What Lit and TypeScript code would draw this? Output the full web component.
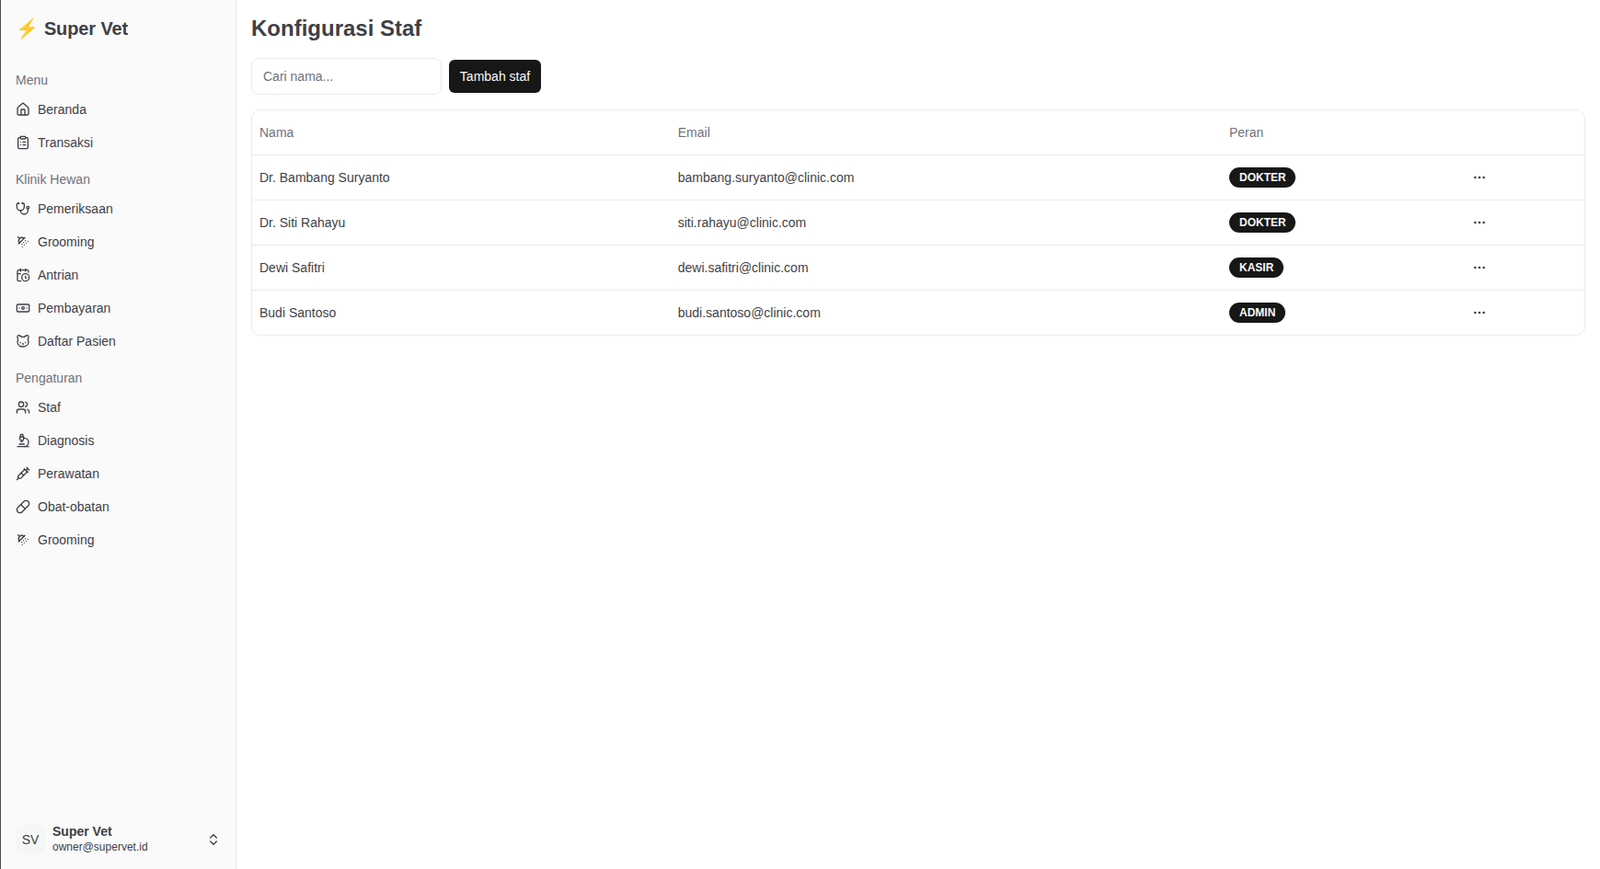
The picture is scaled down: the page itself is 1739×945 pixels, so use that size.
import { LitElement, html, css, svg } from "lit";
import { customElement } from "lit/decorators.js";

const icons: Record<string, any> = {
  house: svg`<path d="M15 21v-8a1 1 0 0 0-1-1h-4a1 1 0 0 0-1 1v8"/><path d="M3 10a2 2 0 0 1 .709-1.528l7-5.999a2 2 0 0 1 2.582 0l7 5.999A2 2 0 0 1 21 10v9a2 2 0 0 1-2 2H5a2 2 0 0 1-2-2z"/>`,
  clipboard: svg`<rect x="8" y="2" width="8" height="4" rx="1"/><path d="M16 4h2a2 2 0 0 1 2 2v14a2 2 0 0 1-2 2H6a2 2 0 0 1-2-2V6a2 2 0 0 1 2-2h2"/><path d="M12 11h4"/><path d="M12 16h4"/><path d="M8 11h.01"/><path d="M8 16h.01"/>`,
  stethoscope: svg`<path d="M11 2v2"/><path d="M5 2v2"/><path d="M5 3H4a2 2 0 0 0-2 2v4a6 6 0 0 0 12 0V5a2 2 0 0 0-2-2h-1"/><path d="M8 15a6 6 0 0 0 12 0v-3"/><circle cx="20" cy="10" r="2"/>`,
  shower: svg`<path d="m4 4 2.5 2.5"/><path d="M13.5 6.5a4.95 4.95 0 0 0-7 7"/><path d="M15 5 5 15"/><path d="M14 17v.01"/><path d="M10 16v.01"/><path d="M13 13v.01"/><path d="M16 10v.01"/><path d="M11 20v.01"/><path d="M17 14v.01"/><path d="M20 11v.01"/>`,
  calendar: svg`<path d="M21 7.5V6a2 2 0 0 0-2-2H5a2 2 0 0 0-2 2v14a2 2 0 0 0 2 2h3.5"/><path d="M16 2v4"/><path d="M8 2v4"/><path d="M3 10h5"/><path d="M17.5 17.5 16 16.3V14"/><circle cx="16" cy="16" r="6"/>`,
  banknote: svg`<rect width="20" height="12" x="2" y="6" rx="2"/><circle cx="12" cy="12" r="2"/><path d="M6 12h.01M18 12h.01"/>`,
  cat: svg`<path d="M12 5c.67 0 1.35.09 2 .26 1.78-2 5.03-2.84 6.42-2.26 1.4.58-.42 7-.42 7 .57 1.07 1 2.24 1 3.44C21 17.9 16.97 21 12 21s-9-3-9-7.56c0-1.25.5-2.4 1-3.44 0 0-1.89-6.42-.5-7 1.39-.58 4.72.23 6.5 2.23A9.04 9.04 0 0 1 12 5Z"/><path d="M8 14v.5"/><path d="M16 14v.5"/><path d="M11.25 16.25h1.5L12 17l-.75-.75Z"/>`,
  users: svg`<path d="M16 21v-2a4 4 0 0 0-4-4H6a4 4 0 0 0-4 4v2"/><circle cx="9" cy="7" r="4"/><path d="M22 21v-2a4 4 0 0 0-3-3.87"/><path d="M16 3.13a4 4 0 0 1 0 7.75"/>`,
  microscope: svg`<path d="M6 18h8"/><path d="M3 22h18"/><path d="M14 22a7 7 0 1 0 0-14h-1"/><path d="M9 14h2"/><path d="M9 12a2 2 0 0 1-2-2V6h6v4a2 2 0 0 1-2 2Z"/><path d="M12 6V3a1 1 0 0 0-1-1H9a1 1 0 0 0-1 1v3"/>`,
  syringe: svg`<path d="m18 2 4 4"/><path d="m17 7 3-3"/><path d="M19 9 8.7 19.3c-1 1-2.5 1-3.4 0l-.6-.6c-1-1-1-2.5 0-3.4L15 5"/><path d="m9 11 4 4"/><path d="m5 19-3 3"/><path d="m14 4 6 6"/>`,
  pill: svg`<path d="m10.5 20.5 10-10a4.95 4.95 0 1 0-7-7l-10 10a4.95 4.95 0 1 0 7 7Z"/><path d="m8.5 8.5 7 7"/>`,
  chevrons: svg`<path d="m7 15 5 5 5-5"/><path d="m7 9 5-5 5 5"/>`,
  ellipsis: svg`<circle cx="12" cy="12" r="1"/><circle cx="19" cy="12" r="1"/><circle cx="5" cy="12" r="1"/>`,
};

const icon = (name: string) =>
  html`<svg class="icon" viewBox="0 0 24 24" fill="none" stroke="currentColor" stroke-width="2" stroke-linecap="round" stroke-linejoin="round">${icons[name]}</svg>`;

const groups = [
  { label: "Menu", items: [["house", "Beranda"], ["clipboard", "Transaksi"]] },
  {
    label: "Klinik Hewan",
    items: [["stethoscope", "Pemeriksaan"], ["shower", "Grooming"], ["calendar", "Antrian"], ["banknote", "Pembayaran"], ["cat", "Daftar Pasien"]],
  },
  {
    label: "Pengaturan",
    items: [["users", "Staf"], ["microscope", "Diagnosis"], ["syringe", "Perawatan"], ["pill", "Obat-obatan"], ["shower", "Grooming"]],
  },
];

const staff = [
  ["Dr. Bambang Suryanto", "bambang.suryanto@clinic.com", "DOKTER"],
  ["Dr. Siti Rahayu", "siti.rahayu@clinic.com", "DOKTER"],
  ["Dewi Safitri", "dewi.safitri@clinic.com", "KASIR"],
  ["Budi Santoso", "budi.santoso@clinic.com", "ADMIN"],
];

@customElement("app-root")
export class AppRoot extends LitElement {
  static styles = css`
    :host {
      display: block;
      height: 945px;
      overflow: hidden;
      background: #4a4a55;
      padding-left: 1px;
      box-sizing: border-box;
      font-family: "Liberation Sans", Arial, sans-serif;
      font-size: 14px;
      color: #3f3f46;
    }
    * { box-sizing: border-box; }
    .shell { display: flex; height: 100%; background: #fff; }
    .sidebar {
      width: 256px;
      flex: none;
      background: #fafafa;
      border-right: 1px solid #ebebeb;
      display: flex;
      flex-direction: column;
    }
    .brand {
      display: flex;
      align-items: flex-start;
      gap: 6px;
      padding: 17px 16px 0;
      height: 65px;
      font-size: 20px;
      font-weight: 700;
      line-height: 28px;
      letter-spacing: -0.12px;
    }
    .nav { display: flex; flex-direction: column; flex: 1; }
    .group { padding: 8px 8px 0; }
    .label {
      height: 28px;
      padding: 0 8px;
      display: flex;
      align-items: center;
      font-size: 14px;
      color: #71717a;
    }
    .item {
      height: 36px;
      padding: 0 8px;
      display: flex;
      align-items: center;
      gap: 8px;
    }
    .item .icon { width: 16px; height: 16px; flex: none; }
    .user {
      display: flex;
      align-items: center;
      gap: 8px;
      padding: 16px;
    }
    .avatar {
      width: 32px;
      height: 32px;
      margin-top: 2px;
      border-radius: 8px;
      background: #f5f7f7;
      display: flex;
      align-items: center;
      justify-content: center;
      flex: none;
    }
    .who { flex: 1; display: flex; flex-direction: column; }
    .who b { font-weight: 700; font-size: 14px; line-height: 18px; }
    .who span { font-size: 12px; line-height: 16px; }
    .user .icon { width: 16px; height: 16px; flex: none; margin-top: 2px; }
    .main { flex: 1; min-width: 0; padding: 16px; }
    h1 {
      margin: 0;
      font-size: 24px;
      font-weight: 700;
      line-height: 30px;
      height: 47px;
    }
    .tools { display: flex; align-items: center; gap: 8px; height: 40px; margin-bottom: 16px; }
    .search {
      width: 207px;
      height: 40px;
      border: 1px solid #ebebeb;
      border-radius: 8px;
      padding: 0 12px;
      font: inherit;
      color: inherit;
      background: #fff;
      outline: none;
    }
    .search::placeholder { color: #71717a; opacity: 1; }
    .add {
      height: 36px;
      width: 100px;
      border: 0;
      border-radius: 6px;
      background: #171717;
      color: #fafafa;
      font: inherit;
      padding: 0;
    }
    .table {
      border: 1px solid #ebebeb;
      border-radius: 10px;
      overflow: hidden;
    }
    .row {
      display: grid;
      grid-template-columns: 454.75px 599.25px 256px 1fr;
      align-items: center;
      height: 49px;
      border-top: 1px solid #ebebeb;
    }
    .row.head { border-top: 0; height: 48px; color: #71717a; }
    .cell { padding: 0 8px; }
    .badge {
      display: inline-flex;
      align-items: center;
      height: 22px;
      padding: 0 10.6px 0 11px;
      border-radius: 999px;
      background: #171717;
      color: #fafafa;
      font-size: 12px;
      font-weight: 700;
    }
    .more { padding-left: 16px; display: flex; }
    .more .icon { width: 16px; height: 16px; }
  `;

  render() {
    return html`<div class="shell">
      <aside class="sidebar">
        <div class="brand"><span>⚡</span><span>Super Vet</span></div>
        <nav class="nav">
          ${groups.map(
            (g) => html`<div class="group">
              <div class="label">${g.label}</div>
              ${g.items.map(([i, t]) => html`<div class="item">${icon(i)}<span>${t}</span></div>`)}
            </div>`
          )}
        </nav>
        <div class="user">
          <div class="avatar">SV</div>
          <div class="who"><b>Super Vet</b><span>owner@supervet.id</span></div>
          ${icon("chevrons")}
        </div>
      </aside>
      <main class="main">
        <h1>Konfigurasi Staf</h1>
        <div class="tools">
          <input class="search" placeholder="Cari nama..." />
          <button class="add">Tambah staf</button>
        </div>
        <div class="table">
          <div class="row head">
            <div class="cell">Nama</div><div class="cell">Email</div><div class="cell">Peran</div><div class="cell"></div>
          </div>
          ${staff.map(
            ([n, e, r]) => html`<div class="row">
              <div class="cell">${n}</div>
              <div class="cell">${e}</div>
              <div class="cell"><span class="badge">${r}</span></div>
              <div class="cell more">${icon("ellipsis")}</div>
            </div>`
          )}
        </div>
      </main>
    </div>`;
  }
}
